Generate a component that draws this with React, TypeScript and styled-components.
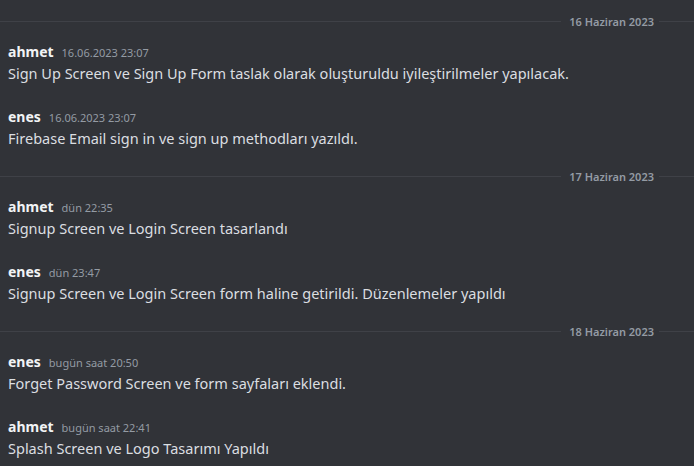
import React from "react";
import styled, { createGlobalStyle } from "styled-components";

const Global = createGlobalStyle`
  html, body { margin: 0; padding: 0; background: #313338; }
  body { font-family: "Noto Sans", "DejaVu Sans", sans-serif; }
`;

const Page = styled.div`
  width: 694px;
  height: 466px;
  background: #313338;
  overflow: hidden;
  padding-top: 21px;
  box-sizing: border-box;
  display: flex;
  flex-direction: column;
`;

const Divider = styled.div`
  display: flex;
  align-items: center;
  height: 1px;
  margin-bottom: 20px;
`;

const Line = styled.div<{ $w?: number }>`
  height: 1px;
  background: #3f4147;
  flex: ${(p) => (p.$w ? `0 0 ${p.$w}px` : "1 1 auto")};
`;

const DateLabel = styled.span`
  font-size: 11px;
  font-weight: 600;
  color: #949ba4;
  padding: 0 5px 0 8px;
  line-height: 13px;
  white-space: nowrap;
`;

const Message = styled.div<{ $last?: boolean }>`
  padding-left: 8px;
  margin-bottom: ${(p) => (p.$last ? 27 : 23)}px;
`;

const Header = styled.div`
  display: flex;
  align-items: baseline;
  gap: 8px;
  height: 20px;
`;

const Username = styled.span`
  font-size: 14px;
  font-weight: 700;
  color: #f2f3f5;
`;

const Time = styled.span`
  font-size: 11px;
  color: #949ba4;
`;

const Body = styled.div`
  font-size: 14.5px;
  color: #dbdee1;
  line-height: 22px;
  white-space: nowrap;
`;

type Msg = { user: string; time: string; text: string };
type Day = { date: string; messages: Msg[] };

const days: Day[] = [
  {
    date: "16 Haziran 2023",
    messages: [
      { user: "ahmet", time: "16.06.2023 23:07", text: "Sign Up Screen ve Sign Up Form taslak olarak oluşturuldu iyileştirilmeler yapılacak." },
      { user: "enes", time: "16.06.2023 23:07", text: "Firebase Email sign in ve sign up methodları yazıldı." },
    ],
  },
  {
    date: "17 Haziran 2023",
    messages: [
      { user: "ahmet", time: "dün 22:35", text: "Signup Screen ve Login Screen tasarlandı" },
      { user: "enes", time: "dün 23:47", text: "Signup Screen ve Login Screen form haline getirildi. Düzenlemeler yapıldı" },
    ],
  },
  {
    date: "18 Haziran 2023",
    messages: [
      { user: "enes", time: "bugün saat 20:50", text: "Forget Password Screen ve form sayfaları eklendi." },
      { user: "ahmet", time: "bugün saat 22:41", text: "Splash Screen ve Logo Tasarımı Yapıldı" },
    ],
  },
];

export default function App() {
  return (
    <>
      <Global />
      <Page>
        {days.map((d) => (
          <React.Fragment key={d.date}>
            <Divider>
              <Line />
              <DateLabel>{d.date}</DateLabel>
              <Line $w={35} />
            </Divider>
            {d.messages.map((m, i) => (
              <Message key={i} $last={i === d.messages.length - 1}>
                <Header>
                  <Username>{m.user}</Username>
                  <Time>{m.time}</Time>
                </Header>
                <Body>{m.text}</Body>
              </Message>
            ))}
          </React.Fragment>
        ))}
      </Page>
    </>
  );
}
